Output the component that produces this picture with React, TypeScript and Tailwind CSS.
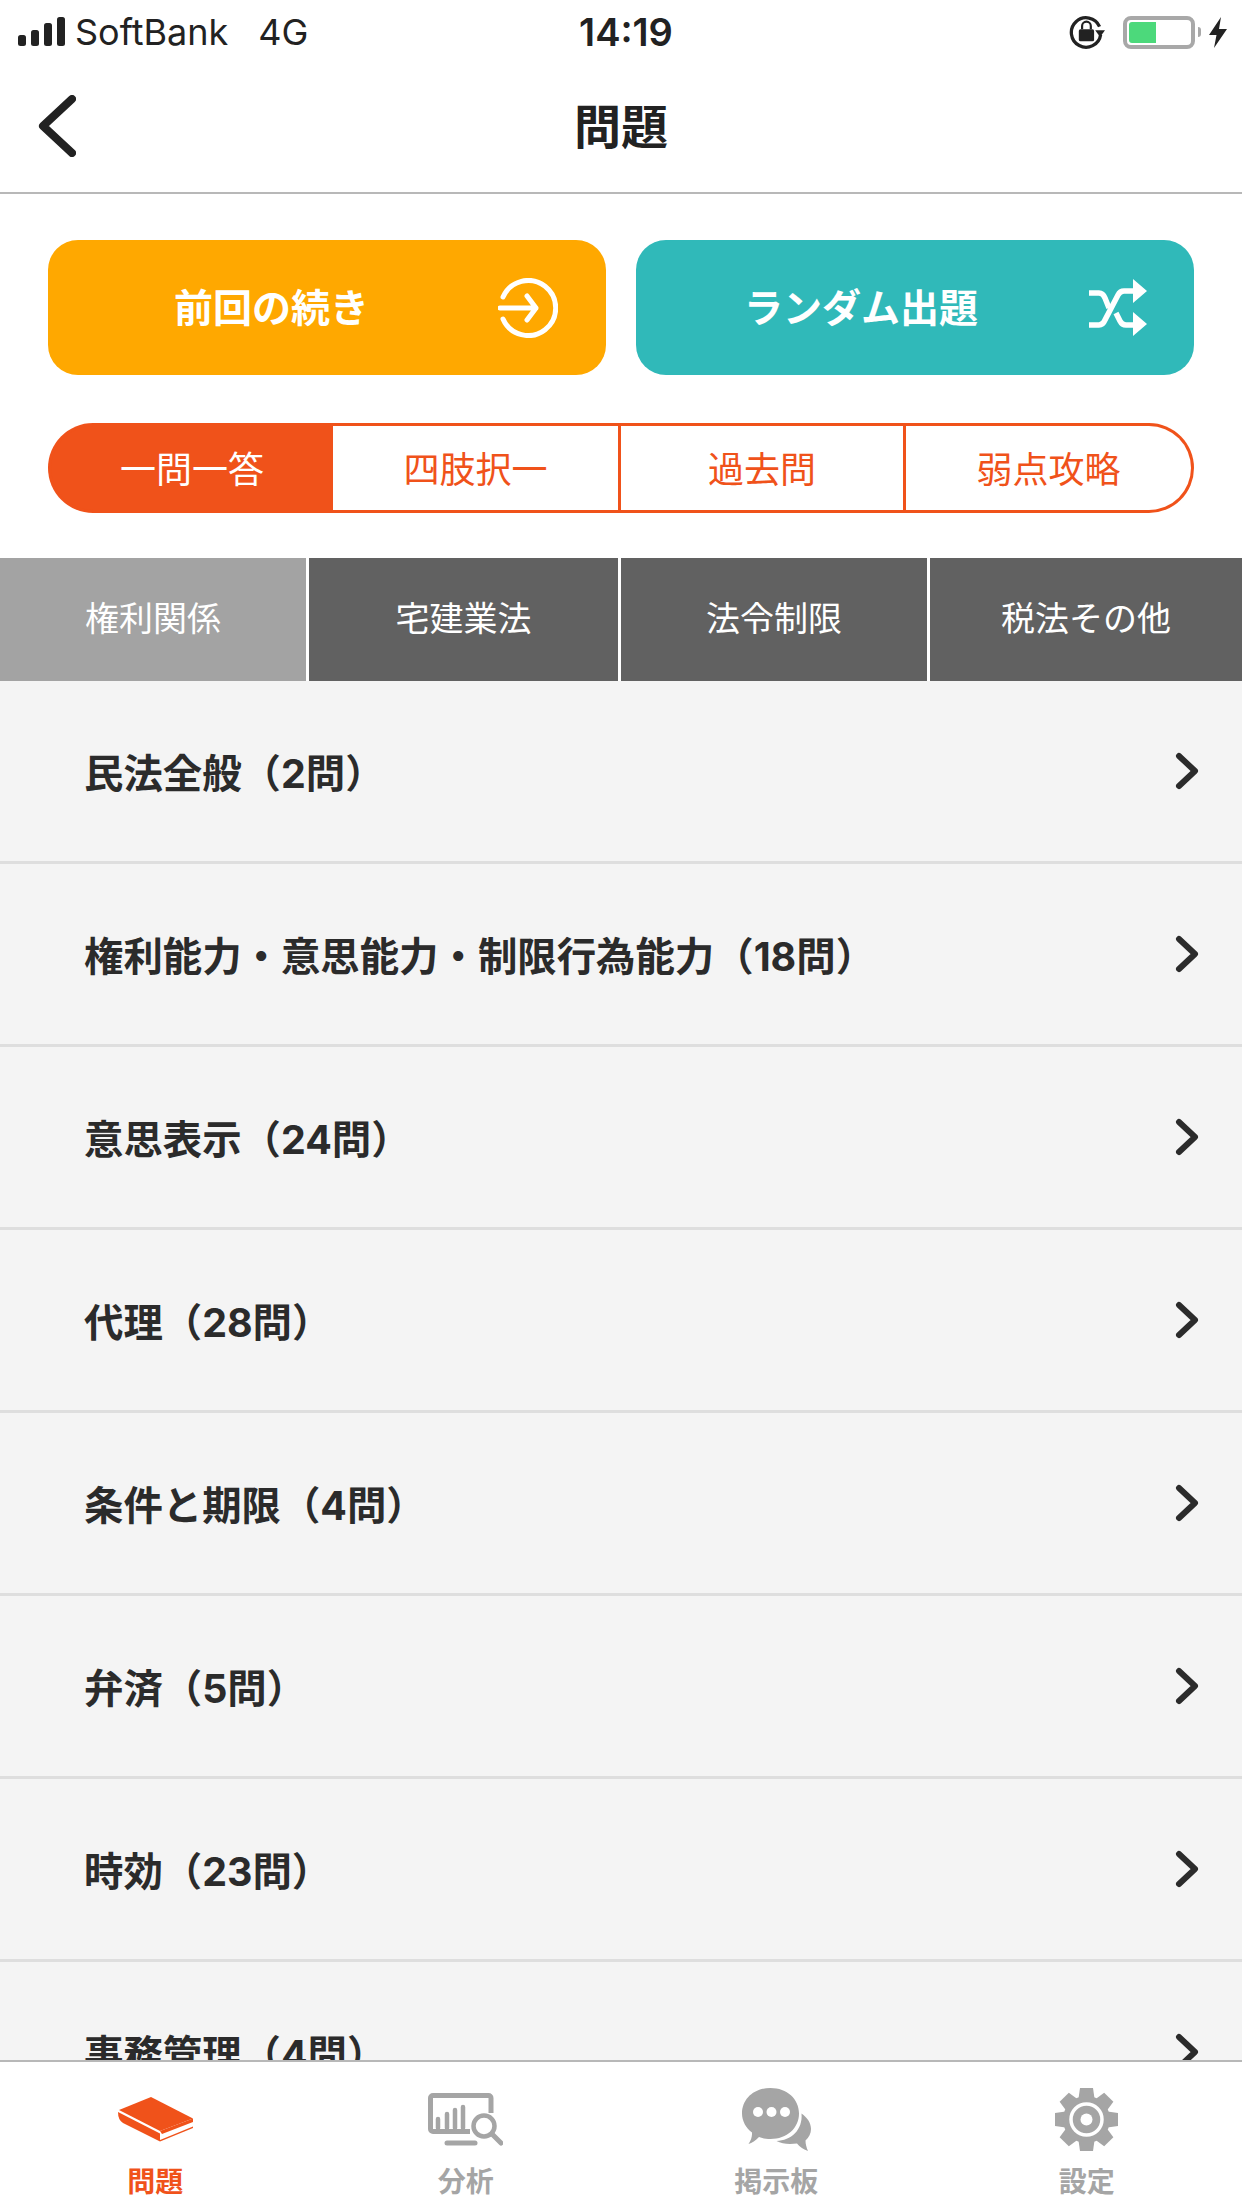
const modes = ["一問一答", "四肢択一", "過去問", "弱点攻略"];
const tabs = ["権利関係", "宅建業法", "法令制限", "税法その他"];
const rows = [
  "民法全般（2問）",
  "権利能力・意思能力・制限行為能力（18問）",
  "意思表示（24問）",
  "代理（28問）",
  "条件と期限（4問）",
  "弁済（5問）",
  "時効（23問）",
  "事務管理（4問）",
];

// Tab bar icons are drawn at their real pixel size
const BookIcon = () => (
  <svg width="75" height="45" viewBox="0 0 75 45" fill="#F0521A">
    <path d="M33 0L75 21.5L42 34L1 13Z" />
    <path d="M0 15L42 36.5V44.5L5 26Q0 23 0 15Z" />
    <path d="M42 44.5L75 31V29.6L42 43Z" />
    <path d="M75 21.5V25L44 37L42 34Z" />
  </svg>
);

const AnalysisIcon = () => (
  <svg width="75" height="53" viewBox="0 0 75 53" fill="none" stroke="#A5A5A5">
    <path d="M63 20V5a2.500 2.500 0 0 0-2.500-2.500H5A2.500 2.500 0 0 0 2.500 5V36a2.500 2.500 0 0 0 2.500 2.500H42" strokeWidth="5" />
    <path d="M10 35V26M19 35V21M27 35V17M35 35V14" strokeWidth="4.500" strokeLinecap="round" />
    <circle cx="56" cy="33" r="10.500" strokeWidth="4.500" />
    <path d="M64 41L73 50" strokeWidth="5" strokeLinecap="round" />
    <path d="M19 50H47" strokeWidth="5" strokeLinecap="round" />
  </svg>
);

const ChatIcon = () => (
  <svg width="69" height="63" viewBox="0 0 69 63">
    <path fill="#A5A5A5" d="M28.500 0C45 0 57 11 57 25.500S45 51 28.500 51C24 51 20.500 50.200 17 49C13.500 52.500 10 55 6.500 56C9 52 10.300 48.500 10 44.500C4 40 0 33 0 25.500C0 11 12 0 28.500 0Z" />
    <path fill="#A5A5A5" d="M59.500 25.500C65 29.500 69 34.500 69 41C69 45.500 67 49.500 63.500 52.500C63.500 56 64.500 59.500 66 63C61 61 57.500 58.500 55 55.500C47 56.500 40 56 34.500 53C49 52.500 61 42 59.500 25.500Z" />
    <circle cx="16" cy="24" r="5" fill="#fff" />
    <circle cx="29.500" cy="24" r="5" fill="#fff" />
    <circle cx="43" cy="24" r="5" fill="#fff" />
  </svg>
);

const GearIcon = () => (
  <svg width="63" height="63" viewBox="0 0 63 63">
    {[0, 45, 90, 135, 180, 225, 270, 315].map((a) => (
      <path key={a} d="M25 0H38L40 14H23Z" fill="#A5A5A5" transform={`rotate(${a} 31.500 31.500)`} />
    ))}
    <circle cx="31.500" cy="31.500" r="23.500" fill="#A5A5A5" />
    <circle cx="31.500" cy="31.500" r="15.500" fill="none" stroke="#fff" strokeWidth="3.500" />
    <circle cx="31.500" cy="31.500" r="6" fill="#fff" />
  </svg>
);

const footerItems = [
  { label: "問題", icon: <BookIcon />, color: "text-[#F0521A]" },
  { label: "分析", icon: <AnalysisIcon />, color: "text-[#A5A5A5]" },
  { label: "掲示板", icon: <ChatIcon />, color: "text-[#A5A5A5]" },
  { label: "設定", icon: <GearIcon />, color: "text-[#A5A5A5]" },
];

const StatusBar = () => (
  <div className="h-[60px] shrink-0 pt-[4px] grid grid-cols-[1fr_auto_1fr] items-center text-[#222] font-['Inter',sans-serif]">
    <div className="flex items-center pl-[18px]">
      <svg width="48" height="30" viewBox="0 0 48 30" fill="#222">
        <rect x="0" y="18" width="8" height="11" rx="2.500" />
        <rect x="13" y="13" width="8" height="16" rx="2.500" />
        <rect x="26" y="6" width="8" height="23" rx="2.500" />
        <rect x="39" y="0" width="8" height="29" rx="2.500" />
      </svg>
      <span className="ml-[9px] text-[36px] leading-none">SoftBank</span>
      <span className="ml-[30px] text-[36px] leading-none">4G</span>
    </div>
    <span className="ml-[10px] text-[38px] leading-none font-semibold">14:19</span>
    <div className="flex items-center justify-end pr-[15px]">
      <svg width="36" height="36" viewBox="0 0 33 33">
        <path d="M28 11.500A13.500 13.500 0 1 0 29 19" fill="none" stroke="#222" strokeWidth="3" />
        <path d="M24 15H33L28.500 21Z" fill="#222" />
        <rect x="9" y="14" width="14" height="11" rx="1.500" fill="#222" />
        <path d="M12 14V11a4 4 0 0 1 8 0v3" fill="none" stroke="#222" strokeWidth="2" />
      </svg>
      <div className="ml-[18px] w-[72px] h-[33px] rounded-[8px] border-[4px] border-[#A8A8A8] p-[2px]">
        <div className="w-[27px] h-full bg-[#4CD97B] rounded-l-[3px]"></div>
      </div>
      <div className="ml-[3px] w-[3px] h-[10px] bg-[#A8A8A8] rounded-r-full"></div>
      <svg className="ml-[8px]" width="18" height="31" viewBox="0 0 18 31" fill="#222">
        <path d="M12 0L0 18H7.500L5 31L18 12H10Z" />
      </svg>
    </div>
  </div>
);

const App = () => {
  return (
    <div className="w-[1242px] h-[2208px] flex flex-col overflow-hidden bg-white font-['Noto_Sans_CJK_JP','Noto_Sans',sans-serif]">
      <StatusBar />

      {/* Nav bar */}
      <div className="h-[134px] shrink-0 border-b-2 border-[#B8B8B8] grid grid-cols-[1fr_auto_1fr] items-center">
        <div className="pl-[38px]">
          <svg width="38" height="62" viewBox="0 0 38 62" fill="none" stroke="#222" strokeWidth="8" strokeLinecap="round" strokeLinejoin="round">
            <path d="M34 4L5 31L34 58" />
          </svg>
        </div>
        <span className="text-[47px] leading-none font-bold text-[#222] -mt-[6px]">問題</span>
        <div></div>
      </div>

      {/* Action buttons */}
      <div className="shrink-0 px-[48px] pt-[46px] flex gap-[30px]">
        <div className="w-[558px] h-[135px] rounded-[30px] bg-[#FFA800] flex items-center justify-between pl-[126px] pr-[48px]">
          <span className="text-[39px] leading-none font-bold text-white -mt-[5px]">前回の続き</span>
          <svg width="60" height="60" viewBox="0 0 60 60" fill="none" stroke="#fff" strokeWidth="5" strokeLinecap="round" strokeLinejoin="round">
            <path d="M5 19A27.500 27.500 0 1 1 5 41" />
            <path d="M2 30H38M29 18L38 30L29 42" />
          </svg>
        </div>
        <div className="w-[558px] h-[135px] rounded-[30px] bg-[#30B9B9] flex items-center justify-between pl-[108px] pr-[47px]">
          <span className="text-[39px] leading-none font-bold text-white -mt-[5px]">ランダム出題</span>
          <svg width="58" height="57" viewBox="0 0 58 57" fill="none" stroke="#fff" strokeWidth="5.500">
            <path d="M0 14H10Q14 14 16 19L20 29" />
            <path d="M0 46H10Q14 46 16 41L29 16Q31 12 35 12H46" />
            <path d="M27 34L31 42Q33 46 37 46H46" />
            <path d="M44 0L58 12L44 24ZM44 33L58 45L44 57Z" fill="#fff" stroke="none" />
          </svg>
        </div>
      </div>

      {/* Question type selector */}
      <div className="shrink-0 px-[48px] pt-[48px]">
        <div className="w-[1146px] h-[90px] rounded-full bg-[#F0521A] p-[3px]">
          <div className="h-full rounded-full overflow-hidden flex text-[36px] leading-none text-[#F0521A]">
            <div className="w-[282px] bg-[#F0521A] text-white flex items-center justify-center">
              <span className="-mt-[3px]">{modes[0]}</span>
            </div>
            <div className="w-[285px] bg-white flex items-center justify-center">
              <span className="-mt-[3px]">{modes[1]}</span>
            </div>
            <div className="w-[285px] bg-white border-l-[3px] border-[#F0521A] flex items-center justify-center">
              <span className="-mt-[3px]">{modes[2]}</span>
            </div>
            <div className="flex-1 bg-white border-l-[3px] border-[#F0521A] flex items-center justify-center">
              <span className="-mt-[3px]">{modes[3]}</span>
            </div>
          </div>
        </div>
      </div>

      {/* Category tabs */}
      <div className="shrink-0 mt-[45px] h-[123px] grid grid-cols-[306px_309px_306px_1fr] gap-x-[3px] text-[34px] leading-none text-white">
        {tabs.map((t, i) => (
          <div key={t} className={i === 0 ? "bg-[#A3A3A3] flex items-center justify-center" : "bg-[#616161] flex items-center justify-center"}>
            <span className="-mt-[5px]">{t}</span>
          </div>
        ))}
      </div>

      {/* Topic list */}
      <div className="flex-1 min-h-0 overflow-hidden bg-[#F4F4F4]">
        {rows.map((r) => (
          <div key={r} className="h-[183px] border-b-[3px] border-[#DEDEDE] flex items-center justify-between pl-[84px] pr-[42px]">
            <span className="mt-[8px] text-[39.4px] leading-none font-bold text-[#2B2B2B] font-['Inter','Noto_Sans_CJK_JP',sans-serif]">{r}</span>
            <svg width="26" height="38" viewBox="0 0 26 38" fill="none" stroke="#2B2B2B" strokeWidth="6" strokeLinecap="round" strokeLinejoin="round">
              <path d="M5 4L21 19L5 34" />
            </svg>
          </div>
        ))}
      </div>

      {/* Tab bar */}
      <div className="h-[148px] shrink-0 border-t-2 border-[#B8B8B8] bg-white grid grid-cols-4">
        {footerItems.map((item) => (
          <div key={item.label} className="flex flex-col items-center">
            <div className="h-[90px] flex items-center justify-center pt-[25px]">{item.icon}</div>
            <span className={`mt-[14px] text-[28px] leading-none font-bold ${item.color}`}>{item.label}</span>
          </div>
        ))}
      </div>
    </div>
  );
};

export default App;
